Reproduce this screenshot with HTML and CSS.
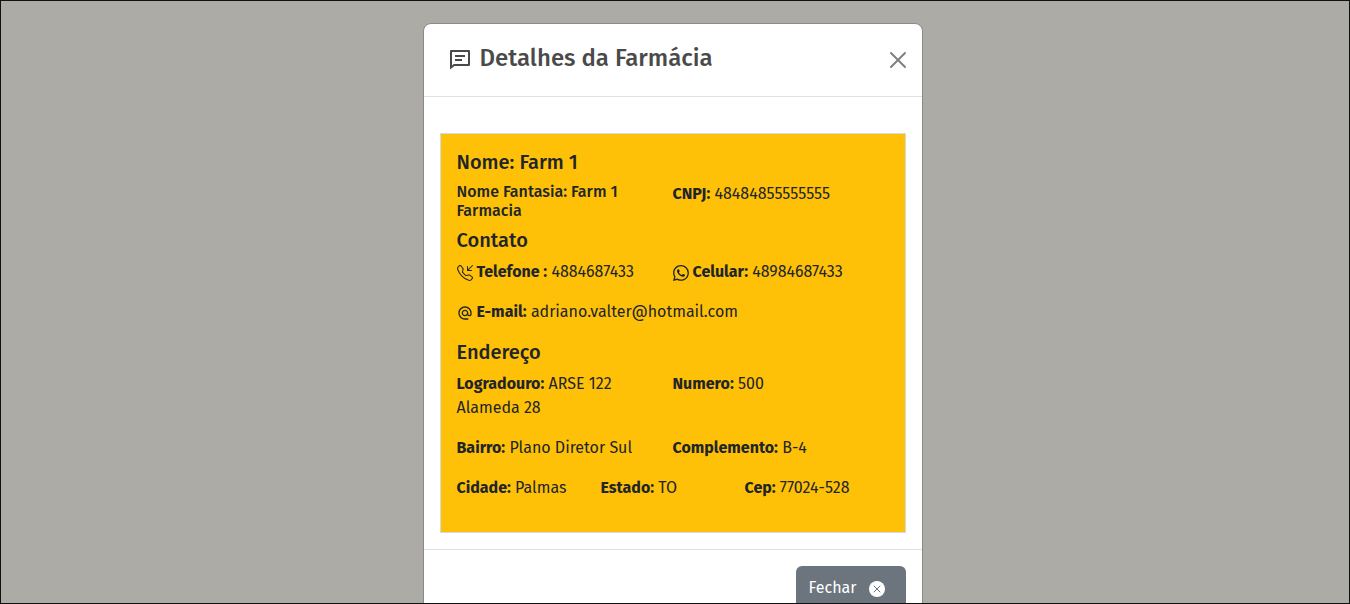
FILE: index.html
```html
<!DOCTYPE html>
<html lang="pt-BR">
<head>
<meta charset="utf-8">
<meta name="viewport" content="width=device-width, initial-scale=1">
<title>Detalhes da Farmácia</title>
<link rel="stylesheet" href="styles.css">
</head>
<body>
<div class="backdrop">
  <section class="modal" role="dialog" aria-modal="true" aria-labelledby="modal-title">
    <header class="modal-header">
      <svg class="title-icon" viewBox="0 0 24 24" aria-hidden="true"><path d="M3 2h18a1 1 0 0 1 1 1v14a1 1 0 0 1-1 1H6.500L2 21.500V3a1 1 0 0 1 1-1zm1 2v13.400L5.800 16H20V4zM7 7h10v2H7zm0 4h7v2H7z" fill-rule="evenodd"/></svg>
      <h4 class="modal-title" id="modal-title">Detalhes da Farmácia</h4>
      <button class="close" type="button" aria-label="Close"><svg viewBox="0 0 16 16" aria-hidden="true"><path d="M1 1l14 14M15 1L1 15"/></svg></button>
    </header>
    <div class="modal-body">
      <article class="card">
        <h5 class="heading">Nome: Farm 1</h5>
        <div class="row halves">
          <h6 class="subheading">Nome Fantasia: Farm 1 Farmacia</h6>
          <p><b>CNPJ:</b> 48484855555555</p>
        </div>
        <h5 class="heading">Contato</h5>
        <div class="row halves spaced">
          <p class="with-icon"><svg class="icon" viewBox="0 0 16 16" aria-hidden="true"><path d="M15.854.146a.5.5 0 0 1 0 .708L11.707 5H14.5a.5.5 0 0 1 0 1h-4a.5.5 0 0 1-.5-.5v-4a.5.5 0 0 1 1 0v2.793L15.146.146a.5.5 0 0 1 .708 0zm-12.2 1.182a.678.678 0 0 0-1.015-.063L1.605 2.3c-.483.484-.661 1.169-.45 1.77a17.568 17.568 0 0 0 4.168 6.608 17.569 17.569 0 0 0 6.608 4.168c.601.211 1.286.033 1.77-.45l1.034-1.034a.678.678 0 0 0-.063-1.015l-2.307-1.794a.678.678 0 0 0-.58-.122l-2.19.547a1.745 1.745 0 0 1-1.657-.459L5.482 8.062a1.745 1.745 0 0 1-.46-1.657l.548-2.19a.678.678 0 0 0-.122-.58L3.654 1.328zM1.884.511a1.745 1.745 0 0 1 2.612.163L6.29 2.98c.329.423.445.974.315 1.494l-.547 2.19a.678.678 0 0 0 .178.643l2.457 2.457a.678.678 0 0 0 .644.178l2.189-.547a1.745 1.745 0 0 1 1.494.315l2.306 1.794c.829.645.905 1.87.163 2.611l-1.034 1.034c-.74.74-1.846 1.065-2.877.702a18.634 18.634 0 0 1-7.01-4.42 18.634 18.634 0 0 1-4.42-7.009c-.362-1.03-.037-2.137.703-2.877L1.885.511z"/></svg><span><b>Telefone :</b> 4884687433</span></p>
          <p class="with-icon"><svg class="icon" viewBox="0 0 16 16" aria-hidden="true"><path d="M13.601 2.326A7.854 7.854 0 0 0 7.994 0C3.627 0 .068 3.558.064 7.926c0 1.399.366 2.76 1.057 3.965L0 16l4.204-1.102a7.933 7.933 0 0 0 3.79.965h.004c4.368 0 7.926-3.558 7.93-7.93A7.898 7.898 0 0 0 13.6 2.326zM7.994 14.521a6.573 6.573 0 0 1-3.356-.92l-.24-.144-2.494.654.666-2.433-.156-.251a6.56 6.56 0 0 1-1.007-3.505c0-3.626 2.957-6.584 6.591-6.584a6.56 6.56 0 0 1 4.66 1.931 6.557 6.557 0 0 1 1.928 4.66c-.004 3.639-2.961 6.592-6.592 6.592zm3.615-4.934c-.197-.099-1.17-.578-1.353-.646-.182-.065-.315-.099-.445.099-.133.197-.513.646-.627.775-.114.133-.232.148-.43.05-.197-.1-.836-.308-1.592-.985-.59-.525-.985-1.175-1.103-1.372-.114-.198-.011-.304.088-.403.087-.088.197-.232.296-.346.1-.114.133-.198.198-.33.065-.134.034-.248-.015-.347-.05-.099-.445-1.076-.612-1.47-.16-.389-.323-.335-.445-.34-.114-.007-.247-.007-.38-.007a.729.729 0 0 0-.529.247c-.182.198-.691.677-.691 1.654 0 .977.71 1.916.81 2.049.098.133 1.394 2.132 3.383 2.992.47.205.84.326 1.129.418.475.152.904.129 1.246.08.38-.058 1.171-.48 1.338-.943.164-.464.164-.86.114-.994-.05-.133-.182-.198-.38-.297z"/></svg><span><b>Celular:</b> 48984687433</span></p>
        </div>
        <div class="row spaced">
          <p class="with-icon"><svg class="icon" viewBox="0 0 24 24" aria-hidden="true"><path d="M12 1.950c-5.520 0-10 4.480-10 10s4.480 10 10 10h5v-2h-5c-4.340 0-8-3.660-8-8s3.660-8 8-8 8 3.660 8 8v1.430c0 .790-.710 1.570-1.500 1.570s-1.500-.780-1.500-1.570v-1.430c0-2.760-2.240-5-5-5s-5 2.240-5 5 2.240 5 5 5c1.380 0 2.640-.560 3.540-1.470.650.890 1.770 1.470 2.960 1.470 1.970 0 3.500-1.600 3.500-3.570v-1.430c0-5.520-4.480-10-10-10zm0 13c-1.660 0-3-1.340-3-3s1.340-3 3-3 3 1.340 3 3-1.340 3-3 3z"/></svg><span><b>E-mail:</b> adriano.valter@hotmail.com</span></p>
        </div>
        <h5 class="heading">Endereço</h5>
        <div class="row halves spaced">
          <p><b>Logradouro:</b> ARSE 122 Alameda 28</p>
          <p><b>Numero:</b> 500</p>
        </div>
        <div class="row halves spaced">
          <p><b>Bairro:</b> Plano Diretor Sul</p>
          <p><b>Complemento:</b> B-4</p>
        </div>
        <div class="row thirds spaced">
          <p><b>Cidade:</b> Palmas</p>
          <p><b>Estado:</b> TO</p>
          <p><b>Cep:</b> 77024-528</p>
        </div>
      </article>
    </div>
    <footer class="modal-footer">
      <button class="btn" type="button">Fechar <svg class="icon" viewBox="0 0 16 16" aria-hidden="true"><circle cx="8" cy="8" r="8" fill="#fff"/><path d="M5 5l6 6M11 5l-6 6" stroke="#6c757d" stroke-linecap="round"/></svg></button>
    </footer>
  </section>
</div>
</body>
</html>
```
FILE: styles.css
```css
* { box-sizing: border-box; }
body {
  margin: 0;
  font: 16px/24px "Fira Sans", "Noto Sans", sans-serif;
  color: #212529;
}
h4, h5, h6, p { margin: 0; }
svg { display: block; flex: none; fill: currentColor; }
b { font-weight: 700; }
.backdrop {
  height: 100vh;
  padding: 22px 5px 0 0;
  overflow: hidden;
  border: 1px solid #111;
  background: #acaba6;
}
.modal {
  max-width: 500px;
  margin: 0 auto;
  border: 1px solid #8b8a87;
  border-radius: 8px;
  background: #fff;
}
.modal-header {
  display: flex;
  align-items: center;
  gap: 8px;
  padding: 16px 16px 16px 24px;
  border-bottom: 1px solid #dee2e6;
  color: #4a4a4a;
}
.title-icon { width: 24px; height: 24px; }
.modal-title {
  padding-bottom: 4px;
  font-size: 24px;
  line-height: 36px;
  font-weight: 500;
}
.close {
  width: 32px;
  height: 32px;
  margin: 0 -8px 0 auto;
  padding: 8px;
  border: 0;
  background: none;
  color: #808080;
}
.close svg {
  width: 16px;
  height: 16px;
  overflow: visible;
  stroke: currentColor;
  stroke-width: 2;
  stroke-linecap: round;
}
.modal-body { padding: 36px 16px 16px; }
.card {
  padding: 16px;
  border: 1px solid #d5dade;
  background: #ffc107;
}
.heading {
  margin-bottom: 8px;
  font-size: 20px;
  line-height: 24px;
  font-weight: 500;
}
.row { display: grid; }
.halves { grid-template-columns: 1fr 1fr; }
.halves > * { padding-right: 24px; }
.thirds { grid-template-columns: repeat(3, 1fr); }
.spaced { margin-bottom: 16px; }
.subheading {
  margin-bottom: 8px;
  font-size: 16px;
  line-height: 19px;
  font-weight: 500;
}
.with-icon {
  display: flex;
  align-items: center;
  gap: 4px;
  white-space: nowrap;
}
.icon {
  width: 16px;
  height: 16px;
  margin-top: 2px;
}
.modal-footer {
  display: flex;
  justify-content: flex-end;
  padding: 16px;
  border-top: 1px solid #dee2e6;
}
.btn {
  display: flex;
  align-items: center;
  gap: 12px;
  padding: 10px 21px 10px 13px;
  border: 0;
  border-radius: 6px;
  background: #6c757d;
  color: #fff;
  font: inherit;
}
```
